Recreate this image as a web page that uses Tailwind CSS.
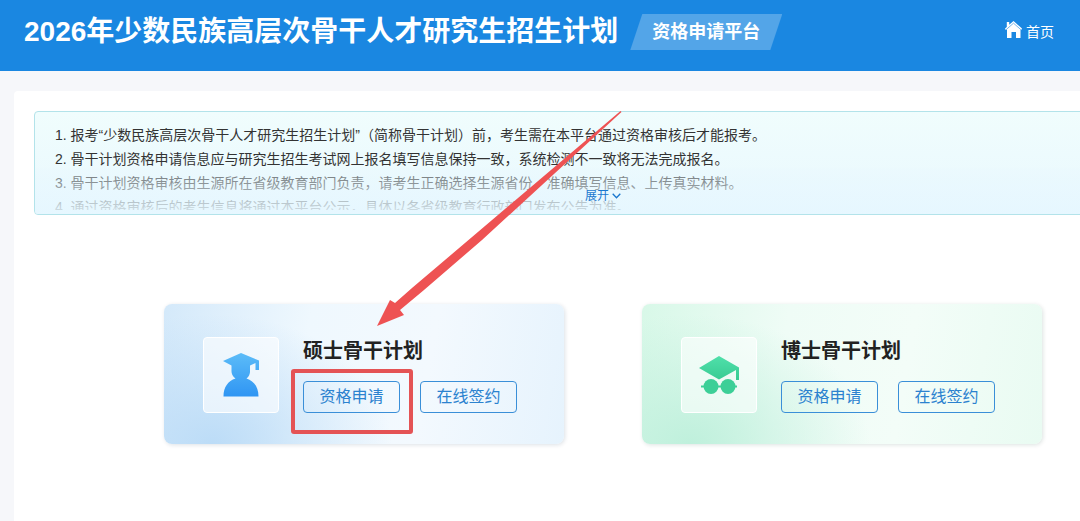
<!DOCTYPE html>
<html lang="zh-CN">
<head>
  <meta charset="UTF-8" />
  <meta name="viewport" content="width=device-width, initial-scale=1.0" />
  <title>2026年少数民族高层次骨干人才研究生招生计划</title>
  <script src="https://cdn.jsdelivr.net/npm/@tailwindcss/browser@4"></script>
</head>
<body class="relative min-h-screen overflow-x-hidden overflow-y-hidden bg-[#f6f7fa] flex flex-col font-['Liberation_Sans','Noto_Sans_CJK_SC',sans-serif] text-[#333] [text-spacing-trim:space-all]">

  <header class="bg-[#1a87e1] text-white flex items-center pl-6 pr-[26px] pt-3.5 pb-[21px]">
    <h1 class="text-[28px] leading-9 font-bold whitespace-nowrap">2026年少数民族高层次骨干人才研究生招生计划</h1>
    <div class="ml-3 h-9 px-[22px] flex items-center shrink-0 bg-white/25 text-lg font-bold whitespace-nowrap [clip-path:polygon(12px_0,100%_0,calc(100%-12px)_100%,0_100%)]">资格申请平台</div>
    <a href="#" class="ml-auto flex items-center gap-1 text-sm whitespace-nowrap">
      <svg class="w-[17px] h-[18px] mb-1" viewBox="0 0 17 18" fill="currentColor">
        <path d="M8.5 0 17 7.600l-.8 1.400L15.500 8.400V17h-4.500v-6H6.500v6H2V8.400L.8 9 0 7.600 1.800 6V1h2.400v2.800z" />
        <path d="M1.200 8.600 8.500 2.200l7.300 6.400" fill="none" stroke="#1a87e1" stroke-width=".6" />
      </svg>
      首页
    </a>
  </header>

  <main class="mt-5 ml-[14px] min-w-[1178px] flex-1 bg-white px-5 pt-5 pb-20 rounded-tl">
    <section class="relative h-[104px] overflow-hidden border border-[#b3e3ea] rounded bg-linear-to-b from-[#f0fdfd] to-[#e9f8fe] pl-5 pt-[11px] text-sm leading-6">
      <div class="h-[87px] overflow-hidden">
        <p>1. 报考“少数民族高层次骨干人才研究生招生计划”（简称骨干计划）前，考生需在本平台通过资格审核后才能报考。</p>
        <p>2. 骨干计划资格申请信息应与研究生招生考试网上报名填写信息保持一致，系统检测不一致将无法完成报名。</p>
        <p>3. 骨干计划资格审核由生源所在省级教育部门负责，请考生正确选择生源省份，准确填写信息、上传真实材料。</p>
        <p>4. 通过资格审核后的考生信息将通过本平台公示，具体以各省级教育行政部门发布公告为准。</p>
      </div>
      <!-- fade over the folded lines -->
      <div class="absolute inset-x-0 bottom-0 h-[46px] flex items-end justify-center pb-2.5 bg-linear-to-b from-[#e9f8fe]/30 to-[#e6f7ff]/90">
        <button type="button" class="flex items-center gap-[3px] text-xs leading-4 text-[#1a78cf]">
          展开
          <svg class="w-[9px] h-[6px]" viewBox="0 0 9 6" fill="none" stroke="currentColor" stroke-width="1.3"><path d="M.7.8 4.500 4.800 8.300.8" /></svg>
        </button>
      </div>
    </section>

    <div class="mt-[89px] flex justify-center gap-[78px]">
      <section class="w-[400px] h-[140px] flex items-center gap-6 pl-[39px] pt-0.5 rounded-lg shadow-[1px_1px_4px_rgba(0,40,80,0.14)] bg-[radial-gradient(ellipse_180px_130px_at_12%_100%,#bcdcf7_0%,transparent_100%),linear-gradient(100deg,#d4e9fa_0%,#eff8fe_35%,#f3f9fe_65%,#e6f3fd_100%)]">
        <div class="w-[76px] h-[76px] flex items-center justify-center rounded border border-white bg-white/60">
          <svg class="w-9 h-11" viewBox="0 0 36 44">
            <defs>
              <linearGradient id="blue" x1="0" y1="0" x2="0" y2="1">
                <stop offset="0" stop-color="#5cbcf8" />
                <stop offset="1" stop-color="#2f95f3" />
              </linearGradient>
            </defs>
            <path fill="url(#blue)" d="M18 0 36 7.500V17h-3.500v-7l-5.500 2.500V17a9.500 9.500 0 0 1-3.500 8.500C31 28 35.500 34 35.500 43.500H.5C.5 34 5 28 12.500 25.500A9.500 9.500 0 0 1 8.500 17v-4.500L0 8z" />
          </svg>
        </div>
        <div>
          <h2 class="text-xl leading-7 font-bold text-[#222]">硕士骨干计划</h2>
          <div class="mt-4 flex gap-5">
            <button type="button" class="w-[97px] h-8 border border-[#3a8fd8] rounded text-base leading-6 text-[#2b82cf]">资格申请</button>
            <button type="button" class="w-[97px] h-8 border border-[#3a8fd8] rounded text-base leading-6 text-[#2b82cf]">在线签约</button>
          </div>
        </div>
      </section>

      <section class="w-[400px] h-[140px] flex items-center gap-6 pl-[39px] pt-0.5 rounded-lg shadow-[1px_1px_4px_rgba(0,60,40,0.14)] bg-[radial-gradient(ellipse_180px_130px_at_12%_100%,#bff0dc_0%,transparent_100%),linear-gradient(100deg,#d8f8e8_0%,#effcf6_35%,#f3fdf8_65%,#e9fbf2_100%)]">
        <div class="w-[76px] h-[76px] flex items-center justify-center rounded border border-white bg-white/60">
          <svg class="w-10 h-[38px]" viewBox="0 0 40 38">
            <defs>
              <linearGradient id="green" x1="0" y1="0" x2="0" y2="1">
                <stop offset="0" stop-color="#50e0aa" />
                <stop offset="1" stop-color="#38cb93" />
              </linearGradient>
            </defs>
            <path fill="url(#green)" d="M20 0 40 11.500V24h-3V14L20 23.500 0 12z" />
            <path stroke="#3ccf97" stroke-width="2" d="M2 30.500h36" />
            <circle cx="12" cy="30.500" r="7.500" fill="#3ccf97" />
            <circle cx="29" cy="30.500" r="7.500" fill="#3ccf97" />
          </svg>
        </div>
        <div>
          <h2 class="text-xl leading-7 font-bold text-[#222]">博士骨干计划</h2>
          <div class="mt-4 flex gap-5">
            <button type="button" class="w-[97px] h-8 border border-[#3a8fd8] rounded text-base leading-6 text-[#2b82cf]">资格申请</button>
            <button type="button" class="w-[97px] h-8 border border-[#3a8fd8] rounded text-base leading-6 text-[#2b82cf]">在线签约</button>
          </div>
        </div>
      </section>
    </div>
  </main>

  <!-- arrow and frame pointing at the apply button -->
  <svg class="absolute left-[290px] top-[110px] w-[334px] h-[326px] pointer-events-none" viewBox="290 110 334 326">
    <path fill="#ee5253" d="M620.500 111 412 288 395 303 390 300 377 326 404 315 400 310 424 290 482 240 621.500 112z" />
    <rect x="293" y="371" width="118" height="61" rx="1" fill="none" stroke="#e45355" stroke-width="4" />
  </svg>

</body>
</html>
